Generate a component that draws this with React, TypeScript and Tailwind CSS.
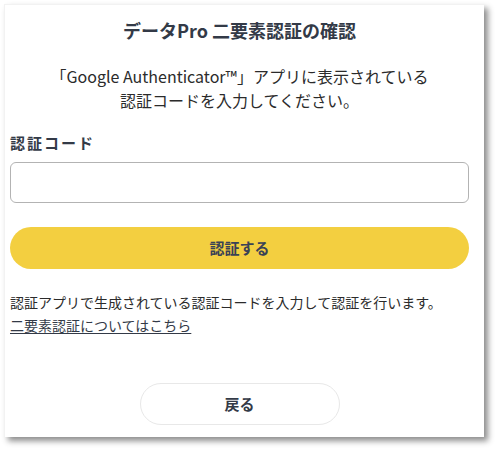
export default function App() {
  return (
    <div
      className="w-[498px] h-[450px] bg-white pt-[4px] pl-[4px]"
      style={{ fontFamily: '"Noto Sans CJK JP", "Noto Sans", sans-serif' }}
    >
      <div className="w-[480px] h-[433px] bg-white border-l border-t border-[#f2f2f2] shadow-[4px_4px_6px_rgba(0,0,0,0.45)] pl-[5px] pt-[12px] text-[#333a47]">
        <div className="w-[459px]">
          <h1 className="text-center text-[18px] font-bold leading-[26px]">データPro 二要素認証の確認</h1>

          <p className="mt-[21px] text-center text-[16px] leading-[24px] text-[#2b2b2b]">
            「Google Authenticator™」アプリに表示されている
            <br />
            認証コードを入力してください。
          </p>

          <label className="block mt-[19px] text-[15px] font-bold leading-[24px] tracking-[2px]">認証コード</label>

          <input
            type="text"
            className="mt-[7px] block w-[459px] h-[41px] rounded-[6px] border border-[#b3b3b3] bg-white px-3 outline-none"
          />

          <button className="mt-[24px] block w-[459px] h-[42px] rounded-full bg-[#f3cf40] text-[15px] font-bold text-[#3a4256]">
            認証する
          </button>

          <p className="mt-[22px] text-[14px] leading-[23px] text-[#2b2b2b]">
            認証アプリで生成されている認証コードを入力して認証を行います。
          </p>
          <a href="#" className="block text-[14px] leading-[23px] text-[#333a47] underline underline-offset-2">
            二要素認証についてはこちら
          </a>

          <div className="mt-[46px] flex justify-center">
            <button className="w-[200px] h-[42px] rounded-full border border-[#e8e8e8] bg-white text-[15px] font-bold text-[#333a47]">
              戻る
            </button>
          </div>
        </div>
      </div>
    </div>
  )
}
